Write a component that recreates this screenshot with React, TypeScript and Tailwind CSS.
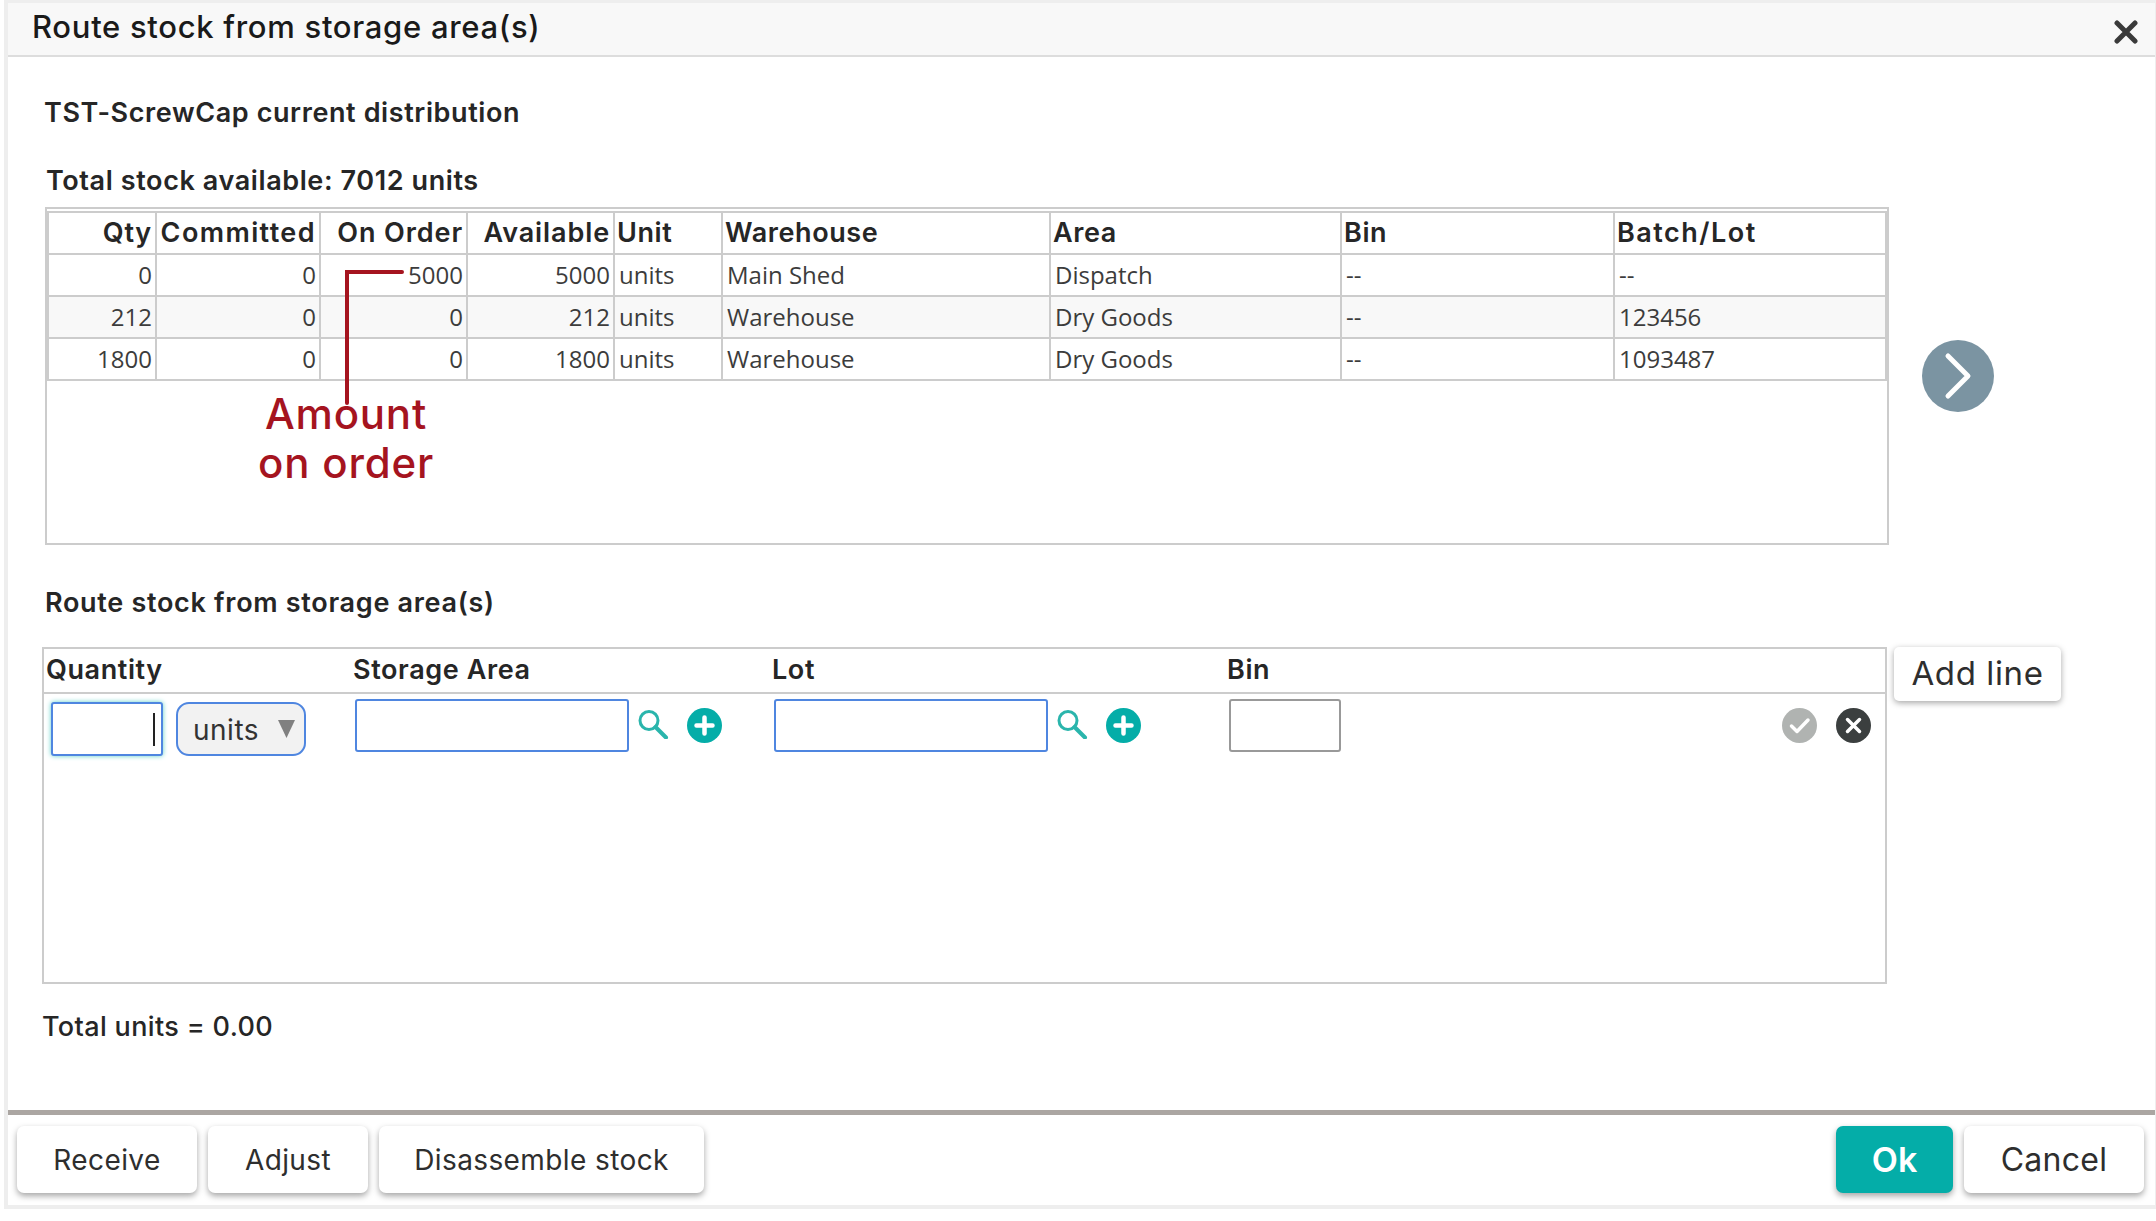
import React from "react";

const rows = [
  ["0", "0", "5000", "5000", "units", "Main Shed", "Dispatch", "--", "--"],
  ["212", "0", "0", "212", "units", "Warehouse", "Dry Goods", "--", "123456"],
  ["1800", "0", "0", "1800", "units", "Warehouse", "Dry Goods", "--", "1093487"],
];
const heads = [
  { t: "Qty", w: "w-[108px] text-right pr-[3px] tracking-[0.8px]" },
  { t: "Committed", w: "w-[164px] text-right pr-[3px] tracking-[1.4px]" },
  { t: "On Order", w: "w-[147px] text-right pr-[3px] tracking-[0.9px]" },
  { t: "Available", w: "w-[147px] text-right pr-[3px] tracking-[0.9px]" },
  { t: "Unit", w: "w-[108px] text-left pl-[2px] tracking-[0.6px]" },
  { t: "Warehouse", w: "w-[328px] text-left pl-[2px] tracking-[0.6px]" },
  { t: "Area", w: "w-[291px] text-left pl-[2px] tracking-[0.6px]" },
  { t: "Bin", w: "w-[273px] text-left pl-[2px] tracking-[0.6px]" },
  { t: "Batch/Lot", w: "w-[272px] text-left pl-[2px] tracking-[1.5px]" },
];

function SearchIcon() {
  return (
    <svg width="32" height="30" viewBox="0 0 32 30" className="shrink-0">
      <circle cx="12" cy="11.5" r="9" fill="none" stroke="#2ab5ac" strokeWidth="3" />
      <path d="M18.5 18 L29 28.5" stroke="#2ab5ac" strokeWidth="4" strokeLinecap="round" />
    </svg>
  );
}
function PlusIcon() {
  return (
    <svg width="35" height="35" viewBox="0 0 35 35" className="shrink-0">
      <circle cx="17.5" cy="17.5" r="17.5" fill="#04ada8" />
      <path d="M17.5 9.5 V25.5 M9.5 17.5 H25.5" stroke="#fff" strokeWidth="4.5" strokeLinecap="round" />
    </svg>
  );
}
function LookupField() {
  return (
    <div className="flex items-start">
      <div className="ml-[2px] mt-[5px] h-[53px] w-[274px] rounded-[3px] border-2 border-[#4f86e0] bg-white" />
      <div className="ml-[8px] mt-[15px]"><SearchIcon /></div>
      <div className="ml-[18px] mt-[14px]"><PlusIcon /></div>
    </div>
  );
}
function Btn({ label, w, big }: { label: string; w: string; big?: boolean }) {
  return (
    <button
      className={`${w} h-[67px] rounded-[7px] bg-white font-[Inter,sans-serif] text-[#2e2e2e] shadow-[0_3px_6px_rgba(0,0,0,0.35)] ${
        big ? "text-[32px] tracking-[0.3px]" : "text-[28px] tracking-[0.4px]"
      }`}
    >
      {label}
    </button>
  );
}

export default function App() {
  return (
    <div className="h-[1221px] w-[2156px] overflow-hidden bg-white pl-[4px] font-[Inter,sans-serif] text-[#262626]">
      <div className="flex h-[1209px] w-[2152px] flex-col border-y-[3px] border-b-[4px] border-l-[4px] border-r-[1px] border-[#eeeeee]">
        <div className="flex h-[54px] shrink-0 items-center justify-between border-b-2 border-[#dddddd] bg-[#f8f8f8] pl-[24px] pr-[17px]">
          <span className="mb-[3px] text-[31px] font-medium tracking-[0.7px] whitespace-nowrap text-[#1a1a1a]">Route stock from storage area(s)</span>
          <svg width="24" height="24" viewBox="0 0 24 24" className="mt-[5px]">
            <path d="M3 3 L21 21 M21 3 L3 21" stroke="#3a3a3a" strokeWidth="5" strokeLinecap="round" />
          </svg>
        </div>

        <div className="flex min-h-0 flex-1 flex-col">
          <div className="ml-[36px] mt-[40px] flex h-[32px] items-center text-[27px] font-semibold tracking-[0.6px] whitespace-nowrap">
            TST-ScrewCap current distribution
          </div>
          <div className="ml-[38px] mt-[36px] flex h-[32px] items-center text-[27px] font-semibold tracking-[0.6px] whitespace-nowrap">
            Total stock available: 7012 units
          </div>

          <div className="ml-[37px] mt-[10px] flex items-start">
            <div className="relative h-[338px] w-[1844px] border-2 border-[#cccccc]">
              <table className="mt-[2px] w-[1838px] table-fixed border-collapse border-2 border-[#cccccc]">
                <thead>
                  <tr className="h-[42px]">
                    {heads.map((h) => (
                      <th
                        key={h.t}
                        className={`${h.w} border-2 border-[#cccccc] pb-[2px] text-[27px] leading-none font-semibold whitespace-nowrap`}
                      >
                        {h.t}
                      </th>
                    ))}
                  </tr>
                </thead>
                <tbody>
                  {rows.map((r, ri) => (
                    <tr key={ri} className={`h-[42px] ${ri === 1 ? "bg-[#f8f8f8]" : "bg-white"}`}>
                      {r.map((c, i) => (
                        <td
                          key={i}
                          className={`border-2 border-[#cccccc] font-['Open_Sans',sans-serif] text-[24px] leading-none text-[#3c3c3c] ${
                            i < 4 ? "pr-[3px] text-right" : "pl-[4px] text-left"
                          }`}
                        >
                          {c}
                        </td>
                      ))}
                    </tr>
                  ))}
                </tbody>
              </table>

              <svg width="60" height="136" viewBox="0 0 60 136" className="absolute left-[298px] top-[60px]">
                <path d="M2 134 V3 H57" fill="none" stroke="#a5141f" strokeWidth="4" strokeLinecap="round" />
              </svg>
              <div className="absolute left-[179px] top-[180px] w-[240px] text-center text-[42px] leading-[49px] font-medium tracking-[0.8px] text-[#a5141f]">
                Amount
                <br />
                on order
              </div>
            </div>
            <div className="ml-[33px] mt-[133px] flex h-[72px] w-[72px] items-center justify-center rounded-full bg-[#7b94a2]">
              <svg width="30" height="50" viewBox="0 0 30 50">
                <path d="M5 5 L25 25 L5 45" fill="none" stroke="#fff" strokeWidth="5" strokeLinecap="round" strokeLinejoin="round" />
              </svg>
            </div>
          </div>

          <div className="ml-[37px] mt-[42px] flex h-[32px] items-center text-[27px] font-semibold tracking-[0.7px] whitespace-nowrap">
            Route stock from storage area(s)
          </div>

          <div className="ml-[34px] mt-[28px] flex items-start">
            <div className="h-[337px] w-[1845px] border-2 border-[#cccccc]">
              <div className="grid h-[45px] grid-cols-[307px_419px_455px_1fr] items-center border-b-2 border-[#cccccc] pl-[2px] text-[27px] font-semibold tracking-[0.6px]">
                <span>Quantity</span>
                <span>Storage Area</span>
                <span>Lot</span>
                <span>Bin</span>
              </div>
              <div className="grid grid-cols-[307px_419px_455px_1fr] pl-[2px]">
                <div className="flex items-start">
                  <div className="ml-[5px] mt-[8px] flex h-[54px] w-[112px] items-center justify-end rounded-[3px] border-2 border-[#4f86e0] bg-white pr-[6px] shadow-[0_0_5px_#5fd0c8]">
                    <div className="h-[33px] w-[2px] bg-[#222222]" />
                  </div>
                  <div className="ml-[13px] mt-[8px] flex h-[54px] w-[130px] items-center justify-between rounded-[13px] border-2 border-[#4f86e0] bg-[#f2f2f2] pl-[15px] pr-[9px] text-[28px] tracking-[0.5px] text-[#333333]">
                    <span className="mt-[2px]">units</span>
                    <svg width="17" height="18" viewBox="0 0 17 18"><path d="M0 0 H17 L8.5 18 Z" fill="#808080" /></svg>
                  </div>
                </div>
                <LookupField />
                <LookupField />
                <div className="flex items-start justify-between pr-[14px]">
                  <div className="ml-[2px] mt-[5px] h-[53px] w-[112px] rounded-[3px] border-2 border-[#999999] bg-white" />
                  <div className="mt-[14px] flex items-center gap-[19px]">
                    <svg width="35" height="35" viewBox="0 0 35 35">
                      <circle cx="17.5" cy="17.5" r="17.5" fill="#b0b3b1" />
                      <path d="M9.5 18 L15 23.5 L26 12" fill="none" stroke="#fff" strokeWidth="3.5" strokeLinecap="round" strokeLinejoin="round" />
                    </svg>
                    <svg width="35" height="35" viewBox="0 0 35 35">
                      <circle cx="17.5" cy="17.5" r="17.5" fill="#3b3f3f" />
                      <path d="M11.5 11.5 L23.5 23.5 M23.5 11.5 L11.5 23.5" stroke="#fff" strokeWidth="3.5" strokeLinecap="round" />
                    </svg>
                  </div>
                </div>
              </div>
            </div>
            <button className="ml-[7px] h-[54px] w-[167px] rounded-[5px] bg-white text-[33px] tracking-[0.6px] text-[#2e2e2e] shadow-[0_2px_6px_rgba(0,0,0,0.35)]">
              Add line
            </button>
          </div>

          <div className="ml-[34px] mt-[27px] flex h-[32px] items-center text-[27px] font-medium tracking-[0.35px]">
            Total units = 0.00
          </div>
        </div>

        <div className="flex h-[95px] shrink-0 items-start justify-between border-t-[5px] border-[#aba6a2] pl-[9px] pr-[11px] pt-[11px]">
          <div className="flex gap-[11px]">
            <Btn label="Receive" w="w-[180px]" />
            <Btn label="Adjust" w="w-[160px]" />
            <Btn label="Disassemble stock" w="w-[325px]" />
          </div>
          <div className="flex gap-[11px]">
            <button className="h-[67px] w-[117px] rounded-[7px] bg-[#04ada8] text-[34px] font-semibold text-white shadow-[0_3px_6px_rgba(0,0,0,0.35)]">Ok</button>
            <Btn label="Cancel" w="w-[180px]" big />
          </div>
        </div>
      </div>
    </div>
  );
}
